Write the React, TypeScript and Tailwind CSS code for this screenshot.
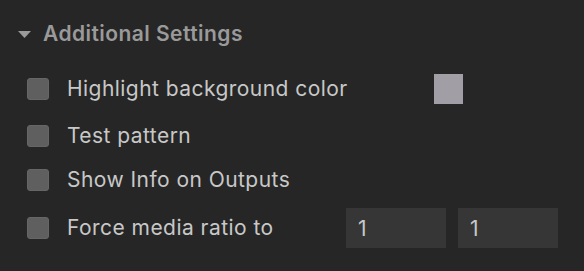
import { useState } from "react";

function Checkbox({ checked, onChange }: { checked: boolean; onChange: () => void }) {
  return (
    <button
      onClick={onChange}
      className="w-[22px] h-[22px] flex-shrink-0 rounded-[3px] bg-[#5f5f5f] border border-[#666666]"
    />
  );
}

export default function App() {
  const [checks, setChecks] = useState([false, false, false, false]);
  const toggle = (i: number) => setChecks((c) => c.map((v, j) => (j === i ? !v : v)));

  return (
    <div className="w-[584px] h-[271px] bg-[#262626] overflow-hidden font-['Inter',sans-serif] text-[21px] tracking-[0.45px] leading-[24px]">
      {/* Section header */}
      <div className="flex items-center pt-[22px] pl-[18px]">
        <svg width="13" height="7" viewBox="0 0 13 7" className="flex-shrink-0">
          <path d="M0 0 L13 0 L6.5 7 Z" fill="#9a9a9a" />
        </svg>
        <div className="ml-3 font-semibold text-[#9a9a9a]">Additional Settings</div>
      </div>

      <div className="flex flex-col gap-5 mt-[28px] pl-[27px] text-[#c8c8c8]">
        <div className="flex items-center h-[30px]">
          <Checkbox checked={checks[0]} onChange={() => toggle(0)} />
          <div className="ml-[18px] w-[367px]">Highlight background color</div>
          <div className="w-[29px] h-[30px] bg-[#a19fa5]" />
        </div>
        <div className="flex items-center">
          <Checkbox checked={checks[1]} onChange={() => toggle(1)} />
          <div className="ml-[18px]">Test pattern</div>
        </div>
        <div className="flex items-center">
          <Checkbox checked={checks[2]} onChange={() => toggle(2)} />
          <div className="ml-[18px]">Show Info on Outputs</div>
        </div>
        <div className="flex items-center -mt-1">
          <Checkbox checked={checks[3]} onChange={() => toggle(3)} />
          <div className="ml-[18px] w-[279px]">Force media ratio to</div>
          <div className="flex gap-3">
            <input
              defaultValue="1"
              className="w-[100px] h-10 bg-[#363636] px-3 text-[#c8c8c8] outline-none"
            />
            <input
              defaultValue="1"
              className="w-[100px] h-10 bg-[#363636] px-3 text-[#c8c8c8] outline-none"
            />
          </div>
        </div>
      </div>
    </div>
  );
}
